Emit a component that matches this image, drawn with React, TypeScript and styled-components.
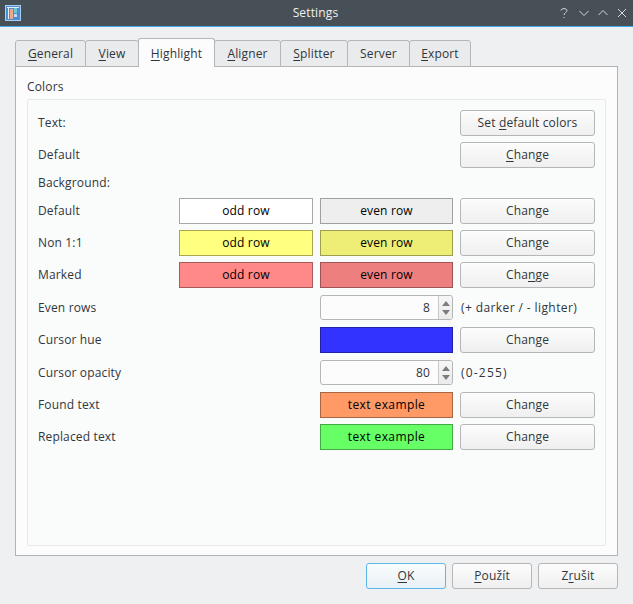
import React from "react";
import styled, { createGlobalStyle } from "styled-components";

const GlobalStyle = createGlobalStyle`
  html, body {
    margin: 0;
    padding: 0;
    background: #eff0f1;
  }
  * {
    box-sizing: border-box;
  }
`;

const Window = styled.div`
  width: 633px;
  height: 604px;
  display: flex;
  flex-direction: column;
  background: #eff0f1;
  color: #31363b;
  font-family: "Open Sans", "Noto Sans", sans-serif;
  font-size: 12px;
  letter-spacing: 0.15px;
  overflow: hidden;
`;

const TitleBar = styled.div`
  height: 27px;
  flex-shrink: 0;
  display: flex;
  align-items: center;
  padding: 0 4px 0 5px;
  background: #475057;
  border-bottom: 1px solid #3daee9;
  color: #eff0f1;
`;

const TitleText = styled.div`
  flex: 1;
  text-align: center;
  font-size: 12px;
  padding-left: 54px;
  padding-bottom: 1px;
`;

const WindowButtons = styled.div`
  display: flex;
  align-items: center;
  gap: 5px;
`;

const Body = styled.div`
  flex: 1;
  display: flex;
  flex-direction: column;
  padding: 11px 15px 15px;
`;

const TabBar = styled.div`
  display: flex;
  align-items: flex-end;
  height: 29px;
  margin-bottom: -1px;
`;

const Tab = styled.div<{ $active?: boolean; $width: number }>`
  width: ${(p) => p.$width}px;
  height: ${(p) => (p.$active ? 29 : 27)}px;
  margin-left: -1px;
  display: flex;
  align-items: center;
  justify-content: center;
  background: ${(p) => (p.$active ? "#fcfcfc" : "#eaebec")};
  border: 1px solid #b4b6b7;
  border-bottom: ${(p) => (p.$active ? "none" : "1px solid #b4b6b7")};
  border-radius: 3px 3px 0 0;
  position: relative;
  z-index: ${(p) => (p.$active ? 1 : 0)};
  &:first-child {
    margin-left: 0;
  }
`;

const Pane = styled.div`
  height: 490px;
  display: flex;
  flex-direction: column;
  background: #fcfcfc;
  border: 1px solid #b0b2b3;
  padding: 12px 11px 9px;
`;

const GroupTitle = styled.div`
  height: 20px;
  line-height: 16px;
`;

const Group = styled.div`
  flex: 1;
  background: #fafbfb;
  border: 1px solid #e8e9ea;
  border-radius: 2px;
  padding: 10px 10px 0;
`;

const Grid = styled.div`
  display: grid;
  grid-template-columns: 134px 134px 133px 135px;
  grid-template-rows: 26px 26px 18px 26px 26px 26px 27px 26px 27px 26px 26px;
  column-gap: 7px;
  row-gap: 6px;
  align-items: center;
`;

const Label = styled.div`
  grid-column: 1 / 2;
  padding-bottom: 1px;
`;

const Spacer = styled.div<{ $span: number }>`
  grid-column: span ${(p) => p.$span};
`;

const Swatch = styled.div<{ $bg: string; $edge: string; $spread?: boolean }>`
  height: 26px;
  display: flex;
  align-items: center;
  justify-content: center;
  padding-bottom: 1px;
  color: #000;
  letter-spacing: ${(p) => (p.$spread ? "0.4px" : "0.15px")};
  background: ${(p) => p.$bg};
  border: 1px solid ${(p) => p.$edge};
`;

const Button = styled.div<{ $focused?: boolean; $width?: number }>`
  width: ${(p) => (p.$width ? `${p.$width}px` : "100%")};
  height: 26px;
  display: flex;
  align-items: center;
  justify-content: center;
  padding-bottom: 1px;
  border: 1px solid ${(p) => (p.$focused ? "#5cb8ea" : "#b4b6b7")};
  border-radius: 3px;
  background: ${(p) =>
    p.$focused
      ? "linear-gradient(#fafcfd, #e8f1f6)"
      : "linear-gradient(#fcfcfc, #efefef)"};
`;

const Spin = styled.div`
  height: 25px;
  display: flex;
  background: #fcfcfc;
  border: 1px solid #b4b6b7;
  border-radius: 3px;
`;

const SpinValue = styled.div`
  flex: 1;
  display: flex;
  align-items: center;
  justify-content: flex-end;
  padding-right: 8px;
  color: #31363b;
`;

const SpinArrows = styled.div`
  width: 14px;
  display: flex;
  flex-direction: column;
  align-items: center;
  justify-content: center;
  gap: 4px;
  border-left: 1px solid #c8c9ca;
  background: linear-gradient(#f6f6f6, #ebebeb);
  border-radius: 0 3px 3px 0;
`;

const Hint = styled.div<{ $spacing: number }>`
  white-space: nowrap;
  padding-left: 1px;
  letter-spacing: ${(p) => p.$spacing}px;
`;

const Footer = styled.div`
  display: flex;
  justify-content: flex-end;
  gap: 6px;
  margin-top: 7px;
`;

const Key = styled.span`
  text-decoration: underline;
  text-underline-offset: 2px;
`;

const ArrowUp = () => (
  <svg width="8" height="5" viewBox="0 0 8 5">
    <path d="M0 5 L4 0 L8 5 Z" fill="#7b7e81" />
  </svg>
);

const ArrowDown = () => (
  <svg width="8" height="5" viewBox="0 0 8 5">
    <path d="M0 0 L8 0 L4 5 Z" fill="#7b7e81" />
  </svg>
);

const SpinBox = ({ value }: { value: string }) => (
  <Spin>
    <SpinValue>{value}</SpinValue>
    <SpinArrows>
      <ArrowUp />
      <ArrowDown />
    </SpinArrows>
  </Spin>
);

const AppIcon = () => (
  <svg width="16" height="16" viewBox="0 0 16 16">
    <rect x="0" y="0" width="16" height="16" fill="#4a8fd6" />
    <rect x="0.5" y="0.5" width="15" height="15" fill="none" stroke="#a9cdf0" />
    <rect x="2" y="2" width="12" height="1" fill="#e4eef8" />
    <rect x="3" y="3" width="1" height="11" fill="#e4eef8" />
    <rect x="5" y="4" width="3" height="10" fill="#eba98e" />
    <rect x="9" y="3" width="3" height="5" fill="#6fc7cf" />
    <rect x="9" y="9" width="3" height="3" fill="#c7d9ee" />
  </svg>
);

const TitleGlyphs = () => (
  <WindowButtons>
    <svg width="16" height="16" viewBox="0 0 16 16" fill="none" stroke="#d5d8da" strokeWidth="1">
      <path d="M5 5.5 C5 3 11 3 11 5.5 C11 7.5 8 7.5 8 10" />
      <path d="M8 12 V13" />
    </svg>
    <svg width="14" height="16" viewBox="0 0 14 16" fill="none" stroke="#d5d8da" strokeWidth="1">
      <path d="M2.5 6 L7 10.5 L11.5 6" />
    </svg>
    <svg width="14" height="16" viewBox="0 0 14 16" fill="none" stroke="#d5d8da" strokeWidth="1">
      <path d="M2.5 10 L7 5.5 L11.5 10" />
    </svg>
    <svg width="14" height="16" viewBox="0 0 14 16" fill="none" stroke="#d5d8da" strokeWidth="1">
      <path d="M3 4 L11 12 M11 4 L3 12" />
    </svg>
  </WindowButtons>
);

const tabs = [
  { key: "G", rest: "eneral", width: 71 },
  { key: "V", rest: "iew", width: 54 },
  { key: "H", rest: "ighlight", width: 77, active: true },
  { key: "A", rest: "ligner", width: 67 },
  { key: "S", rest: "plitter", width: 68 },
  { key: "", rest: "Server", width: 63 },
  { key: "E", rest: "xport", width: 62 },
];

const App = () => {
  return (
    <>
      <GlobalStyle />
      <Window>
        <TitleBar>
          <AppIcon />
          <TitleText>Settings</TitleText>
          <TitleGlyphs />
        </TitleBar>
        <Body>
          <TabBar>
            {tabs.map((t) => (
              <Tab key={t.rest} $active={t.active} $width={t.width}>
                <span>
                  <Key>{t.key}</Key>
                  {t.rest}
                </span>
              </Tab>
            ))}
          </TabBar>
          <Pane>
            <GroupTitle>Colors</GroupTitle>
            <Group>
              <Grid>
                <Label>Text:</Label>
                <Spacer $span={2} />
                <Button>
                  <span>
                    Set <Key>d</Key>efault colors
                  </span>
                </Button>

                <Label>Default</Label>
                <Spacer $span={2} />
                <Button>
                  <span>
                    <Key>C</Key>hange
                  </span>
                </Button>

                <Label>Background:</Label>
                <Spacer $span={3} />

                <Label>Default</Label>
                <Swatch $bg="#ffffff" $edge="#a8a8a8">odd row</Swatch>
                <Swatch $bg="#eeeeee" $edge="#a0a0a0">even row</Swatch>
                <Button>Change</Button>

                <Label>Non 1:1</Label>
                <Swatch $bg="#ffff80" $edge="#a8a850">odd row</Swatch>
                <Swatch $bg="#eeee77" $edge="#9e9e50">even row</Swatch>
                <Button>Change</Button>

                <Label>Marked</Label>
                <Swatch $bg="#ff8888" $edge="#a85a5a">odd row</Swatch>
                <Swatch $bg="#ee7f7f" $edge="#9e5454">even row</Swatch>
                <Button>
                  <span>
                    Cha<Key>n</Key>ge
                  </span>
                </Button>

                <Label>Even rows</Label>
                <Spacer $span={1} />
                <SpinBox value="8" />
                <Hint $spacing={0.4}>(+ darker / - lighter)</Hint>

                <Label>Cursor hue</Label>
                <Spacer $span={1} />
                <Swatch $bg="#3333ff" $edge="#2222aa" />
                <Button>Change</Button>

                <Label>Cursor opacity</Label>
                <Spacer $span={1} />
                <SpinBox value="80" />
                <Hint $spacing={1.2}>(0-255)</Hint>

                <Label>Found text</Label>
                <Spacer $span={1} />
                <Swatch $bg="#ff9966" $edge="#a86644" $spread>text example</Swatch>
                <Button>Change</Button>

                <Label>Replaced text</Label>
                <Spacer $span={1} />
                <Swatch $bg="#66ff66" $edge="#44a844" $spread>text example</Swatch>
                <Button>Change</Button>
              </Grid>
            </Group>
          </Pane>
          <Footer>
            <Button $focused $width={80}>
              <span>
                <Key>O</Key>K
              </span>
            </Button>
            <Button $width={80}>
              <span>
                <Key>P</Key>oužít
              </span>
            </Button>
            <Button $width={80}>
              <span>
                Z<Key>r</Key>ušit
              </span>
            </Button>
          </Footer>
        </Body>
      </Window>
    </>
  );
};

export default App;
